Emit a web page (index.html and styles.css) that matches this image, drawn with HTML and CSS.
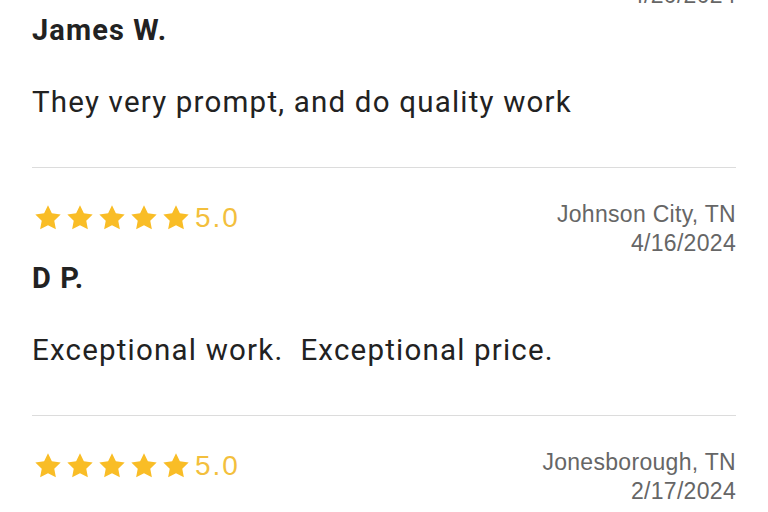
FILE: index.html
```html
<!DOCTYPE html>
<html lang="en">
<head>
    <meta charset="UTF-8">
    <meta name="viewport" content="width=device-width, initial-scale=1.0">
    <title>Reviews</title>
    <link rel="stylesheet" href="styles.css">
</head>
<body>
    <div class="reviews">
        <div class="review">
            <div class="head">
                <div class="rating">
                    <span class="stars">
                        <svg viewBox="0 0 24 24"><path d="M12 2.5l2.9 6 6.6.9-4.8 4.6 1.2 6.5L12 17.4l-5.9 3.1 1.2-6.5-4.8-4.6 6.6-.9z"/></svg>
                        <svg viewBox="0 0 24 24"><path d="M12 2.5l2.9 6 6.6.9-4.8 4.6 1.2 6.5L12 17.4l-5.9 3.1 1.2-6.5-4.8-4.6 6.6-.9z"/></svg>
                        <svg viewBox="0 0 24 24"><path d="M12 2.5l2.9 6 6.6.9-4.8 4.6 1.2 6.5L12 17.4l-5.9 3.1 1.2-6.5-4.8-4.6 6.6-.9z"/></svg>
                        <svg viewBox="0 0 24 24"><path d="M12 2.5l2.9 6 6.6.9-4.8 4.6 1.2 6.5L12 17.4l-5.9 3.1 1.2-6.5-4.8-4.6 6.6-.9z"/></svg>
                        <svg viewBox="0 0 24 24"><path d="M12 2.5l2.9 6 6.6.9-4.8 4.6 1.2 6.5L12 17.4l-5.9 3.1 1.2-6.5-4.8-4.6 6.6-.9z"/></svg>
                    </span>
                    <span class="score">5.0</span>
                </div>
                <div class="meta">
                    <div>Johnson City, TN</div>
                    <div>4/20/2024</div>
                </div>
            </div>
            <div class="name">James W.</div>
            <p class="text">They very prompt, and do quality work</p>
        </div>
        <div class="review">
            <div class="head">
                <div class="rating">
                    <span class="stars">
                        <svg viewBox="0 0 24 24"><path d="M12 2.5l2.9 6 6.6.9-4.8 4.6 1.2 6.5L12 17.4l-5.9 3.1 1.2-6.5-4.8-4.6 6.6-.9z"/></svg>
                        <svg viewBox="0 0 24 24"><path d="M12 2.5l2.9 6 6.6.9-4.8 4.6 1.2 6.5L12 17.4l-5.9 3.1 1.2-6.5-4.8-4.6 6.6-.9z"/></svg>
                        <svg viewBox="0 0 24 24"><path d="M12 2.5l2.9 6 6.6.9-4.8 4.6 1.2 6.5L12 17.4l-5.9 3.1 1.2-6.5-4.8-4.6 6.6-.9z"/></svg>
                        <svg viewBox="0 0 24 24"><path d="M12 2.5l2.9 6 6.6.9-4.8 4.6 1.2 6.5L12 17.4l-5.9 3.1 1.2-6.5-4.8-4.6 6.6-.9z"/></svg>
                        <svg viewBox="0 0 24 24"><path d="M12 2.5l2.9 6 6.6.9-4.8 4.6 1.2 6.5L12 17.4l-5.9 3.1 1.2-6.5-4.8-4.6 6.6-.9z"/></svg>
                    </span>
                    <span class="score">5.0</span>
                </div>
                <div class="meta">
                    <div>Johnson City, TN</div>
                    <div>4/16/2024</div>
                </div>
            </div>
            <div class="name">D P.</div>
            <p class="text">Exceptional work.&nbsp; Exceptional price.</p>
        </div>
        <div class="review">
            <div class="head">
                <div class="rating">
                    <span class="stars">
                        <svg viewBox="0 0 24 24"><path d="M12 2.5l2.9 6 6.6.9-4.8 4.6 1.2 6.5L12 17.4l-5.9 3.1 1.2-6.5-4.8-4.6 6.6-.9z"/></svg>
                        <svg viewBox="0 0 24 24"><path d="M12 2.5l2.9 6 6.6.9-4.8 4.6 1.2 6.5L12 17.4l-5.9 3.1 1.2-6.5-4.8-4.6 6.6-.9z"/></svg>
                        <svg viewBox="0 0 24 24"><path d="M12 2.5l2.9 6 6.6.9-4.8 4.6 1.2 6.5L12 17.4l-5.9 3.1 1.2-6.5-4.8-4.6 6.6-.9z"/></svg>
                        <svg viewBox="0 0 24 24"><path d="M12 2.5l2.9 6 6.6.9-4.8 4.6 1.2 6.5L12 17.4l-5.9 3.1 1.2-6.5-4.8-4.6 6.6-.9z"/></svg>
                        <svg viewBox="0 0 24 24"><path d="M12 2.5l2.9 6 6.6.9-4.8 4.6 1.2 6.5L12 17.4l-5.9 3.1 1.2-6.5-4.8-4.6 6.6-.9z"/></svg>
                    </span>
                    <span class="score">5.0</span>
                </div>
                <div class="meta">
                    <div>Jonesborough, TN</div>
                    <div>2/17/2024</div>
                </div>
            </div>
            <div class="name">Anonymous</div>
            <p class="text">Great job.</p>
        </div>
    </div>
</body>
</html>
```

FILE: styles.css
```css
body {
    margin: 0;
    background: #fff;
    color: #222;
    font-family: Roboto, "Liberation Sans", sans-serif;
}
.reviews {
    margin-top: -80px;
    padding: 0 32px;
}
.review {
    padding: 32px 0 45px;
    border-bottom: 1px solid #dcdcdc;
}
.head {
    display: flex;
    justify-content: space-between;
    align-items: flex-start;
}
.rating {
    display: flex;
    align-items: center;
    height: 36px;
}
.stars {
    display: flex;
}
.stars svg {
    width: 32px;
    height: 32px;
    fill: #f9bd26;
}
.score {
    margin-left: 3px;
    color: #f3bf3d;
    font-family: "Liberation Sans", sans-serif;
    font-size: 28px;
    letter-spacing: 2px;
}
.meta {
    text-align: right;
    color: #666;
    font-family: "Liberation Sans", sans-serif;
    font-size: 23px;
    letter-spacing: 0.3px;
    line-height: 29px;
}
.name {
    margin-top: 2px;
    font-size: 29px;
    font-weight: 700;
    letter-spacing: 1.1px;
    line-height: 36px;
}
.text {
    margin: 34px 0 0;
    font-size: 29.5px;
    letter-spacing: 1.2px;
    line-height: 40px;
}
```
